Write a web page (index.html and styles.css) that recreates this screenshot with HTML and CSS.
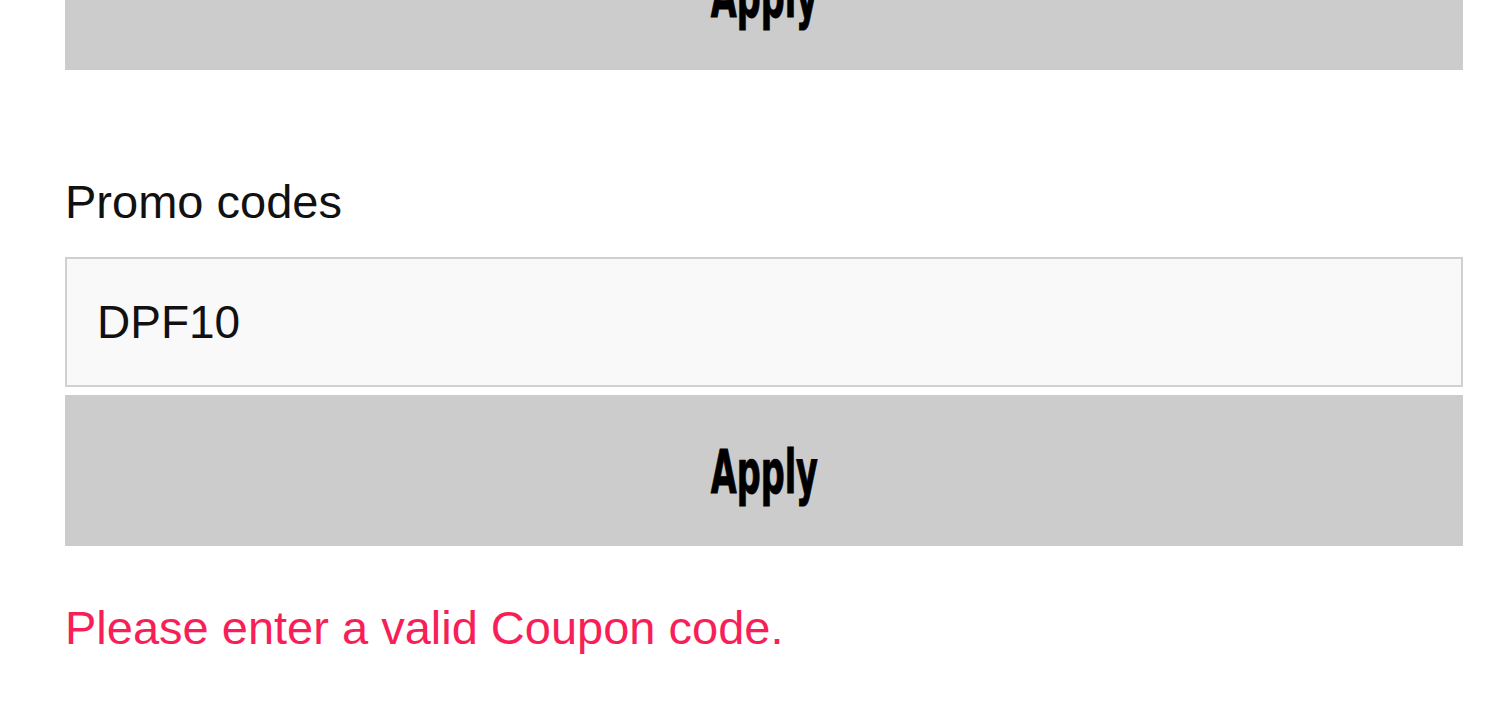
FILE: index.html
```html
<!DOCTYPE html>
<html lang="en">

<head>
    <meta charset="UTF-8">
    <meta name="viewport" content="width=device-width, initial-scale=1.0">
    <title>Promo codes</title>
    <link rel="stylesheet" href="styles.css">
</head>

<body>
    <div class="cart-box">
        <button class="apply-btn top-btn"><span>Apply</span></button>

        <div class="promo">
            <label for="promo" class="promo-label">Promo codes</label>
            <input type="text" id="promo" class="promo-input" value="DPF10">
            <button class="apply-btn"><span>Apply</span></button>
            <p class="error">Please enter a valid Coupon code.</p>
        </div>
    </div>
</body>

</html>
```

FILE: styles.css
```css
body {
    margin: 0;
    padding: 0;
    background-color: #fff;
    font-family: "Liberation Sans", Arial, sans-serif;
    overflow: hidden;
}

.cart-box {
    width: 1398px;
    margin-left: 65px;
    margin-top: -81px;
}

.apply-btn {
    display: flex;
    align-items: center;
    justify-content: center;
    width: 100%;
    height: 151px;
    background-color: #cccccc;
    border: none;
    padding: 0;
    cursor: pointer;
}

.apply-btn span {
    display: inline-block;
    font-family: "Liberation Sans Narrow", "DejaVu Sans", sans-serif;
    font-stretch: condensed;
    font-weight: bold;
    font-size: 60px;
    color: #000;
    transform: scaleX(0.62);
    margin-top: 2px;
    -webkit-text-stroke: 1px #000;
}

.promo {
    display: flex;
    flex-direction: column;
    margin-top: 104px;
}

.promo-label {
    font-size: 47px;
    color: #111;
    margin-bottom: 28px;
}

.promo-input {
    box-sizing: border-box;
    width: 100%;
    height: 130px;
    padding: 0 30px;
    font-family: "Liberation Sans", Arial, sans-serif;
    font-size: 46px;
    color: #111;
    background-color: #f9f9f9;
    border: 2px solid #d0d0d0;
    margin: 0 0 8px 0;
    outline: none;
}

.error {
    margin: 54px 0 0 0;
    font-size: 47px;
    color: #f81f58;
}
```
